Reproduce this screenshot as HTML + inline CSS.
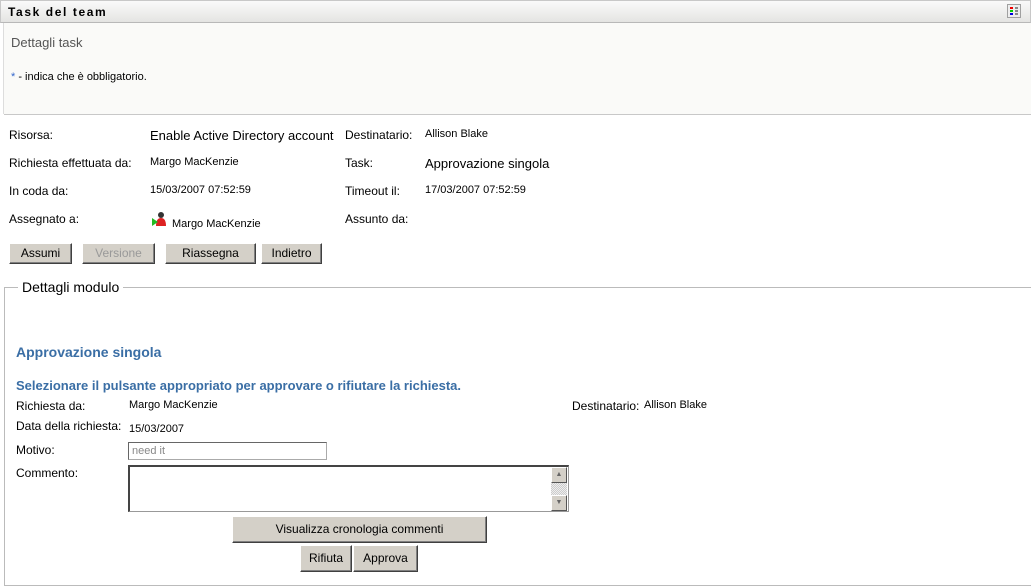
<!DOCTYPE html>
<html><head><meta charset="utf-8"><style>
*{margin:0;padding:0;box-sizing:border-box}
body{width:1031px;height:586px;background:#fff;font-family:"Liberation Sans",sans-serif;color:#000;position:relative;overflow:hidden}
.a{position:absolute;white-space:nowrap}
.l{font-size:12px}
.s{font-size:11px}
.v{font-size:13px}
.btn{position:absolute;background:#d4d0c8;border:1px solid;border-color:#fff #404040 #404040 #fff;box-shadow:inset -1px -1px 0 #808080;font-size:12px;text-align:center;line-height:18px;height:21px}
</style></head><body>
<div class="a" style="left:0;top:0;width:1031px;height:23px;background:linear-gradient(#fafafa,#e4e4e2);border:1px solid #c8c8c8;border-bottom-color:#b8b8b8"></div>
<div class="a" style="left:8px;top:5px;font-size:12px;font-weight:bold;letter-spacing:1.6px">Task del team</div>
<div class="a" style="left:1007px;top:4px;width:14px;height:14px;border:1px solid #a0a0a0;background:#eee">
<svg width="12" height="12" style="position:absolute;left:0;top:0"><rect x="2" y="2" width="3" height="2" fill="#e00"/><rect x="2" y="5" width="3" height="2" fill="#0c0"/><rect x="2" y="8" width="3" height="2" fill="#00d"/><rect x="7" y="2" width="3" height="2" fill="#888"/><rect x="7" y="5" width="3" height="2" fill="#888"/><rect x="7" y="8" width="3" height="2" fill="#888"/></svg></div>
<div class="a" style="left:3px;top:23px;width:1028px;height:91px;background:#fafaf8;border-left:1px solid #ddd"></div>
<div class="a" style="left:4px;top:114px;width:1027px;height:1px;background:#c8c8c8"></div>
<div class="a" style="left:11px;top:35px;font-size:13px;color:#555">Dettagli task</div>
<div class="a s" style="left:11px;top:71px"><span style="color:#36c">*</span> - indica che è obbligatorio.</div>

<div class="a l" style="left:9px;top:128px">Risorsa:</div>
<div class="a v" style="left:150px;top:128px">Enable Active Directory account</div>
<div class="a l" style="left:345px;top:128px">Destinatario:</div>
<div class="a s" style="left:425px;top:128px">Allison Blake</div>

<div class="a l" style="left:9px;top:156px">Richiesta effettuata da:</div>
<div class="a s" style="left:150px;top:156px">Margo MacKenzie</div>
<div class="a l" style="left:345px;top:156px">Task:</div>
<div class="a v" style="left:425px;top:156px">Approvazione singola</div>

<div class="a l" style="left:9px;top:184px">In coda da:</div>
<div class="a s" style="left:150px;top:184px">15/03/2007 07:52:59</div>
<div class="a l" style="left:345px;top:184px">Timeout il:</div>
<div class="a s" style="left:425px;top:184px">17/03/2007 07:52:59</div>

<div class="a l" style="left:9px;top:212px">Assegnato a:</div>
<svg class="a" style="left:151px;top:210px" width="17" height="17"><circle cx="10" cy="5" r="3" fill="#333"/><path d="M5 16 Q5 8 10 8 Q15 8 15 16Z" fill="#d22"/><path d="M1 8 L7 12 L1 16Z" fill="#2b2"/></svg>
<div class="a s" style="left:172px;top:218px">Margo MacKenzie</div>
<div class="a l" style="left:345px;top:212px">Assunto da:</div>

<div class="btn" style="left:9px;top:243px;width:63px">Assumi</div>
<div class="btn" style="left:82px;top:243px;width:73px;color:#999">Versione</div>
<div class="btn" style="left:165px;top:243px;width:91px">Riassegna</div>
<div class="btn" style="left:261px;top:243px;width:61px">Indietro</div>

<div class="a" style="left:4px;top:287px;width:1027px;height:299px;border:1px solid #bbb;border-right:none"></div>
<div class="a" style="left:18px;top:279px;background:#fff;padding:0 4px;font-size:14px">Dettagli modulo</div>

<div class="a" style="left:16px;top:344px;font-size:14px;font-weight:bold;color:#3a6ea5">Approvazione singola</div>
<div class="a" style="left:16px;top:378px;font-size:13px;font-weight:bold;color:#3a6ea5">Selezionare il pulsante appropriato per approvare o rifiutare la richiesta.</div>
<div class="a l" style="left:16px;top:399px">Richiesta da:</div>
<div class="a s" style="left:129px;top:399px">Margo MacKenzie</div>
<div class="a l" style="left:572px;top:399px">Destinatario:</div>
<div class="a s" style="left:644px;top:399px">Allison Blake</div>
<div class="a l" style="left:16px;top:419px">Data della richiesta:</div>
<div class="a s" style="left:129px;top:423px">15/03/2007</div>
<div class="a l" style="left:16px;top:443px">Motivo:</div>
<div class="a" style="left:128px;top:442px;width:199px;height:18px;border:1px solid #aaa;border-top-color:#666;border-left-color:#666;font-size:11px;color:#888;padding:2px 3px">need it</div>
<div class="a l" style="left:16px;top:466px">Commento:</div>
<div class="a" style="left:128px;top:465px;width:441px;height:47px;border:1px solid #999;border-top:2px solid #444;border-left:2px solid #444"></div>
<div class="a" style="left:551px;top:467px;width:16px;height:44px;background:repeating-conic-gradient(#ccc 0 25%,#eee 0 50%) 0 0/2px 2px"></div>
<div class="a" style="left:551px;top:467px;width:16px;height:16px;background:#d4d0c8;border:1px solid;border-color:#fff #555 #555 #fff;font-size:7px;text-align:center;line-height:14px;color:#666">▲</div>
<div class="a" style="left:551px;top:495px;width:16px;height:16px;background:#d4d0c8;border:1px solid;border-color:#fff #555 #555 #fff;font-size:7px;text-align:center;line-height:14px;color:#666">▼</div>

<div class="btn" style="left:232px;top:516px;width:255px;height:27px;line-height:24px">Visualizza cronologia commenti</div>
<div class="btn" style="left:300px;top:545px;width:52px;height:27px;line-height:24px">Rifiuta</div>
<div class="btn" style="left:353px;top:545px;width:65px;height:27px;line-height:24px">Approva</div>
</body></html>
